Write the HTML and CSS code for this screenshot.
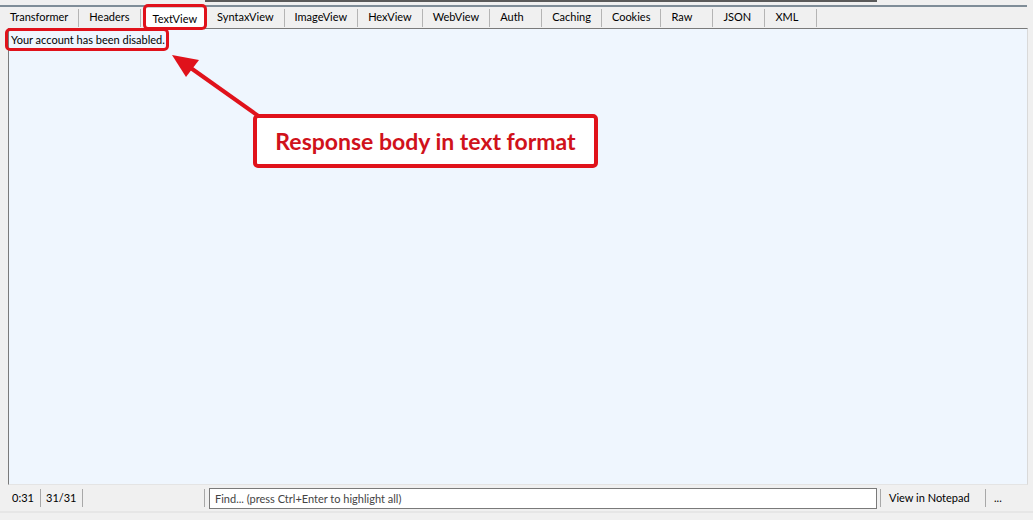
FILE: index.html
```html
<!DOCTYPE html>
<html lang="en">
<head>
  <meta charset="UTF-8">
  <title>TextView</title>
  <link rel="stylesheet" href="styles.css">
</head>
<body>

<div class="ventana">
  <div class="barra-superior"><div class="linea-oscura"></div></div>

  <!-- pestañas -->
  <div class="pestanas">
    <div class="pestana">Transformer</div>
    <div class="pestana">Headers</div>
    <div class="pestana activa"><span>TextView</span></div>
    <div class="pestana">SyntaxView</div>
    <div class="pestana">ImageView</div>
    <div class="pestana">HexView</div>
    <div class="pestana">WebView</div>
    <div class="pestana">Auth</div>
    <div class="pestana">Caching</div>
    <div class="pestana">Cookies</div>
    <div class="pestana">Raw</div>
    <div class="pestana">JSON</div>
    <div class="pestana">XML</div>
  </div>

  <!-- cuerpo de respuesta -->
  <div class="cuerpo">
    <div class="texto-respuesta">Your account has been disabled.</div>
  </div>

  <!-- barra de estado -->
  <div class="estado">
    <div class="celda c1">0:31</div>
    <div class="celda c2">31/31</div>
    <div class="celda vacia"></div>
    <div class="buscar">Find... (press Ctrl+Enter to highlight all)</div>
    <div class="celda notepad">View in Notepad</div>
    <div class="celda puntos">...</div>
  </div>
  <div class="linea-inferior"></div>

  <!-- anotaciones -->
  <div class="marca marca-tab"></div>
  <div class="marca marca-texto"></div>
  <svg class="flecha" viewBox="0 0 1033 520">
    <line x1="264" y1="120" x2="188" y2="66" stroke="#e0121b" stroke-width="4"/>
    <polygon points="172,55 199,60 186,77" fill="#e0121b"/>
  </svg>
  <div class="globo">Response body in text format</div>
</div>

</body>
</html>
```

FILE: styles.css
```css
body {
  margin: 0;
  background-color: #f0f0f0;
  font-family: Lato, "Open Sans", sans-serif;
  font-size: 11px;
  color: #000;
}

.ventana {
  position: relative;
  width: 1033px;
  height: 520px;
  overflow: hidden;
}

.barra-superior {
  height: 5px;
  border-bottom: 2px solid #7f8d98;
  margin-right: 6px;
}

.linea-oscura {
  margin-left: 205px;
  width: 672px;
  height: 2px;
  background-color: #5a5a5a;
}

.pestanas {
  display: flex;
  height: 21px;
  align-items: stretch;
}

.pestana {
  box-sizing: border-box;
  min-width: 52px;
  padding: 0 10px 3px 10px;
  display: flex;
  align-items: center;
  border-right: 1px solid #b4b4b4;
  margin: 2px 0 1px;
}

.pestana.activa {
  padding: 0 2px 0 4px;
  margin: 0 0 -2px;
  border-right: none;
}

.pestana.activa span {
  background-color: #fff;
  height: 100%;
  padding: 0 7px 2px;
  box-sizing: border-box;
  display: flex;
  align-items: center;
  border: 1px solid #d0d0d0;
  border-bottom: none;
}

.cuerpo {
  height: 455px;
  margin: 0 5px 0 8px;
  background-color: #eff6fe;
  border-top: 1px solid #7a7a7a;
  border-left: 1px solid #7a7a7a;
  border-right: 1px solid #d9d9d9;
  border-bottom: 1px solid #e4e4e4;
}

.texto-respuesta {
  padding: 4px 0 0 2px;
}

.estado {
  display: flex;
  align-items: center;
  height: 24px;
  margin: 1px 0 0 4px;
}

.celda {
  box-sizing: border-box;
  height: 18px;
  line-height: 18px;
  border-right: 1px solid #a8a8a8;
}

.celda.c1 {
  width: 37px;
  padding-left: 8px;
}

.celda.c2 {
  width: 42px;
  padding-left: 5px;
}

.celda.vacia {
  width: 122px;
}

.buscar {
  box-sizing: border-box;
  width: 668px;
  height: 21px;
  line-height: 19px;
  margin: 0 3px 0 4px;
  padding-left: 5px;
  background-color: #fff;
  border: 1px solid #7a7a7a;
  color: #444;
}

.celda.notepad {
  width: 106px;
  border-left: 1px solid #a8a8a8;
  padding: 0 8px;
}

.celda.puntos {
  border-right: none;
  padding-left: 8px;
}

.linea-inferior {
  height: 2px;
  margin-top: 1px;
  background-color: #e6e6e6;
}

.marca {
  position: absolute;
  border: 3px solid #e0121b;
  border-radius: 5px;
}

.marca-tab {
  left: 143px;
  top: 4px;
  width: 58px;
  height: 20px;
}

.marca-texto {
  left: 5px;
  top: 28px;
  width: 158px;
  height: 17px;
}

.flecha {
  position: absolute;
  top: 0;
  left: 0;
  width: 1033px;
  height: 520px;
  pointer-events: none;
}

.globo {
  position: absolute;
  left: 253px;
  top: 114px;
  width: 337px;
  height: 46px;
  border: 4px solid #e0121b;
  border-radius: 5px;
  background-color: #fff;
  color: #d0121b;
  font-family: Lato, "Open Sans", sans-serif;
  font-weight: bold;
  font-size: 23px;
  display: flex;
  align-items: center;
  justify-content: center;
}
```
